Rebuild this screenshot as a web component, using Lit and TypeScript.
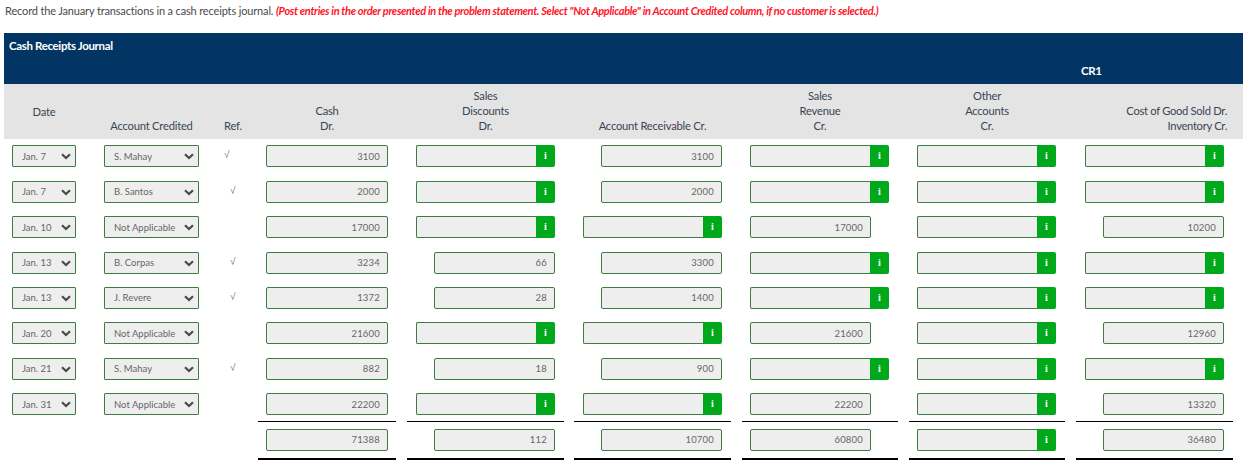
import { html, css, LitElement } from "lit";
import { customElement } from "lit/decorators.js";

type Row = {
  date: string;
  account: string;
  ref: "" | "left" | "mid";
  cash: string;
  disc: string;
  ar: string;
  rev: string;
  other: string;
  cogs: string;
};

const NA = "Not Applicable";

const ROWS: Row[] = [
  { date: "Jan. 7", account: "S. Mahay", ref: "left", cash: "3100", disc: "", ar: "3100", rev: "", other: "", cogs: "" },
  { date: "Jan. 7", account: "B. Santos", ref: "mid", cash: "2000", disc: "", ar: "2000", rev: "", other: "", cogs: "" },
  { date: "Jan. 10", account: NA, ref: "", cash: "17000", disc: "", ar: "", rev: "17000", other: "", cogs: "10200" },
  { date: "Jan. 13", account: "B. Corpas", ref: "mid", cash: "3234", disc: "66", ar: "3300", rev: "", other: "", cogs: "" },
  { date: "Jan. 13", account: "J. Revere", ref: "mid", cash: "1372", disc: "28", ar: "1400", rev: "", other: "", cogs: "" },
  { date: "Jan. 20", account: NA, ref: "", cash: "21600", disc: "", ar: "", rev: "21600", other: "", cogs: "12960" },
  { date: "Jan. 21", account: "S. Mahay", ref: "mid", cash: "882", disc: "18", ar: "900", rev: "", other: "", cogs: "" },
  { date: "Jan. 31", account: NA, ref: "", cash: "22200", disc: "", ar: "", rev: "22200", other: "", cogs: "13320" },
];

const TOTALS = { cash: "71388", disc: "112", ar: "10700", rev: "60800", other: "", cogs: "36480" };

const DATES = ["Jan. 7", "Jan. 10", "Jan. 13", "Jan. 20", "Jan. 21", "Jan. 31"];
const ACCOUNTS = ["S. Mahay", "B. Santos", "B. Corpas", "J. Revere", NA];

@customElement("app-root")
export class AppRoot extends LitElement {
  private dropdown(value: string, options: string[], cls: string) {
    return html`
      <div class="select ${cls}">
        <select>
          ${options.map((o) => html`<option ?selected=${o === value}>${o}</option>`)}
        </select>
        <svg class="chev" width="10" height="7" viewBox="0 0 10 7">
          <polyline points="1,1.2 5,5 9,1.2" fill="none" stroke="#4a4a4a" stroke-width="2.2" />
        </svg>
      </div>
    `;
  }

  // empty cells get the green info button, filled ones are a shorter box
  private field(cls: string, value: string, rule = "") {
    return html`
      <div class="cell ${cls}">
        <div class="field">
          ${value
            ? html`<input class="filled" readonly .value=${value} />`
            : html`<input class="empty" readonly /><button class="info">i</button>`}
        </div>
        ${rule ? html`<div class="rule ${rule}"></div>` : null}
      </div>
    `;
  }

  private amounts(r: Omit<Row, "date" | "account" | "ref">, rule = "") {
    return html`
      ${this.field("c-cash", r.cash, rule)}
      ${this.field("c-disc", r.disc, rule)}
      ${this.field("c-ar", r.ar, rule)}
      ${this.field("c-rev", r.rev, rule)}
      ${this.field("c-other", r.other, rule)}
      ${this.field("c-cogs", r.cogs, rule)}
    `;
  }

  override render() {
    return html`
      <p class="intro">
        Record the January transactions in a cash receipts journal.
        <em>(Post entries in the order presented in the problem statement. Select "Not Applicable" in Account Credited column, if no customer is selected.)</em>
      </p>
      <section class="journal">
        <div class="banner">
          <div class="name">Cash Receipts Journal</div>
          <div class="code grid"><span>CR1</span></div>
        </div>
        <div class="heads grid">
          <div class="h date">Date</div>
          <div class="h acct">Account Credited</div>
          <div class="h ref">Ref.</div>
          <div class="h c-cash">Cash<br />Dr.</div>
          <div class="h c-disc">Sales<br />Discounts<br />Dr.</div>
          <div class="h c-ar">Account Receivable Cr.</div>
          <div class="h c-rev">Sales<br />Revenue<br />Cr.</div>
          <div class="h c-other">Other<br />Accounts<br />Cr.</div>
          <div class="h c-cogs right">Cost of Good Sold Dr.<br />Inventory Cr.</div>
        </div>
        <div class="rows">
          ${ROWS.map(
            (r, i) => html`
              <div class="row grid">
                ${this.dropdown(r.date, DATES, "s-date")}
                ${this.dropdown(r.account, ACCOUNTS, "s-acct")}
                <div class="tick ${r.ref}">${r.ref ? "√" : ""}</div>
                ${this.amounts(r, i === ROWS.length - 1 ? "single" : "")}
              </div>
            `
          )}
          <div class="row grid">
            <div></div>
            <div></div>
            <div></div>
            ${this.amounts(TOTALS, "double")}
          </div>
        </div>
      </section>
    `;
  }

  static styles = css`
    :host {
      display: block;
      width: 1257px;
      height: 473px;
      overflow: hidden;
      background: #fff;
      font-family: Lato, "Liberation Sans", sans-serif;
      color: #3a4654;
    }
    .intro {
      margin: 0 0 11px;
      padding-left: 5px;
      height: 22px;
      line-height: 22px;
      font-size: 11px;
      letter-spacing: -0.15px;
      color: #4a4a4a;
      white-space: nowrap;
    }
    .intro em {
      font-weight: 700;
      letter-spacing: -0.32px;
      color: #ff1428;
    }
    .journal {
      margin-left: 4px;
      width: 1239px;
    }
    .grid {
      display: grid;
      grid-template-columns: 80px 135px 39px 149px 167px 168px 167px 167px 167px;
    }
    .banner {
      height: 51px;
      background: #023563;
      color: #fff;
      font-size: 11.5px;
      font-weight: 700;
      letter-spacing: -0.35px;
      line-height: 15px;
      padding-top: 4.5px;
      box-sizing: border-box;
    }
    .name {
      padding-left: 5px;
    }
    .code {
      margin-top: 10px;
    }
    .code span {
      grid-column: 9;
      padding-left: 5px;
    }
    .heads {
      height: 55px;
      background: #e4e4e4;
      font-size: 11.2px;
      letter-spacing: -0.22px;
      line-height: 15px;
      padding-bottom: 6.5px;
      box-sizing: border-box;
    }
    .h {
      align-self: end;
      text-align: center;
    }
    .h.date {
      align-self: center;
      padding-top: 6.5px;
    }
    .h.acct {
      padding-left: 20px;
      padding-right: 20px;
      white-space: nowrap;
    }
    .h.ref {
      text-align: left;
      padding-left: 5px;
    }
    .h.right {
      text-align: right;
      padding-right: 16px;
      letter-spacing: -0.3px;
    }
    .c-cash {
      padding-right: 11px;
    }
    .c-disc,
    .c-cogs {
      padding-right: 10px;
    }
    .c-ar,
    .c-rev,
    .c-other {
      padding-right: 11px;
    }
    .rows {
      padding-top: 6.3px;
    }
    .row {
      height: 35.43px;
    }
    .select {
      position: relative;
      height: 22px;
    }
    .s-date {
      width: 64px;
      margin-left: 8px;
    }
    .s-acct {
      width: 95px;
      margin-left: 20px;
    }
    select {
      display: block;
      appearance: none;
      width: 100%;
      height: 22px;
      box-sizing: border-box;
      margin: 0;
      padding: 0 0 0 9px;
      border: 1px solid #3f7c43;
      border-radius: 1px;
      background: #eee;
      color: #666;
      font: 9.5px Lato, "Liberation Sans", sans-serif;
    }
    .chev {
      position: absolute;
      right: 5px;
      top: 8px;
      pointer-events: none;
    }
    .tick {
      height: 22px;
      font: 10px/20px "Liberation Sans", sans-serif;
      color: #777;
    }
    .tick.left {
      padding-left: 5px;
    }
    .tick.mid {
      padding-left: 11px;
    }
    .field {
      display: flex;
      height: 22px;
      margin: 0 9px;
      justify-content: flex-end;
    }
    .c-cash .field {
      margin: 0 8px;
    }
    .c-rev .field,
    .c-other .field {
      margin-left: 8px;
    }
    .c-rev .field {
      justify-content: flex-start;
    }
    input {
      box-sizing: border-box;
      min-width: 0;
      height: 22px;
      margin: 0;
      border: 1px solid #3f7c43;
      border-radius: 2px;
      background: #eee;
      color: #666;
      font: 9.5px Lato, "Liberation Sans", sans-serif;
      letter-spacing: 0.2px;
      text-align: right;
      padding: 0 7px 0 0;
      outline: none;
    }
    .filled {
      width: 121px;
    }
    .c-cash .filled {
      width: 122px;
    }
    .empty {
      flex: 1;
      border-radius: 2px 0 0 2px;
      border-right: none;
    }
    .info {
      flex: none;
      width: 19px;
      height: 22px;
      padding: 0;
      border: none;
      border-radius: 0 2px 2px 0;
      background: #00a91c;
      color: #fff;
      font: 700 10px/22px "Liberation Serif", serif;
      text-align: center;
    }
    .rule {
      background: #000;
    }
    .rule.single {
      height: 1px;
      margin-top: 5.5px;
    }
    .rule.double {
      height: 2px;
      margin-top: 7.5px;
    }
  `;
}
